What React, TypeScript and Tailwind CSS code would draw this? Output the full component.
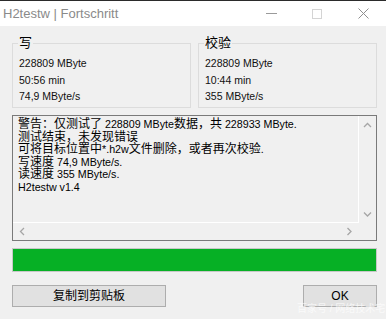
import React from "react";

const font = { fontFamily: '"Liberation Sans", "Noto Sans CJK SC", sans-serif' };

function Chevron({ dir }: { dir: "up" | "down" | "left" | "right" }) {
  const paths: Record<string, string> = {
    up: "M1 5 L4.5 1.5 L8 5",
    down: "M1 1.5 L4.5 5 L8 1.5",
    left: "M5 1 L1.5 4.5 L5 8",
    right: "M1.5 1 L5 4.5 L1.5 8",
  };
  const vert = dir === "up" || dir === "down";
  return (
    <svg width={vert ? 9 : 7} height={vert ? 7 : 9} viewBox={vert ? "0 0 9 7" : "0 0 7 9"}>
      <path d={paths[dir]} fill="none" stroke="#a6a6a6" strokeWidth="1.3" />
    </svg>
  );
}

function Group({ label, lines }: { label: string; lines: string[] }) {
  return (
    <div className="relative flex-1 border border-[#dcdcdc] pt-[11px] pl-[6px]">
      <div className="absolute left-[5px] -top-[9px] px-[1px] bg-[#f0f0f0] text-[13px] leading-[16px] text-black">
        {label}
      </div>
      {lines.map((l) => (
        <div key={l} className="text-[10.5px] leading-[16.5px] text-[#111]">
          {l}
        </div>
      ))}
    </div>
  );
}

function MixedLine({ text }: { text: string }) {
  const parts = text.match(/[\u3000-\u9fff\uff00-\uffef]+|[^\u3000-\u9fff\uff00-\uffef]+/g) || [];
  return (
    <div className="h-[12.6px] flex items-end whitespace-nowrap">
      {parts.map((p, i) =>
        /[\u3000-\u9fff\uff00-\uffef]/.test(p) ? (
          <span key={i} className="text-[12px] leading-[12.6px]">
            {p}
          </span>
        ) : (
          <span key={i} className="text-[10.7px] leading-[12.6px] whitespace-pre">
            {p}
          </span>
        )
      )}
    </div>
  );
}

export default function App() {
  const textLines = [
    "警告：仅测试了 228809 MByte数据，共 228933 MByte.",
    "测试结束，未发现错误",
    "可将目标位置中*.h2w文件删除，或者再次校验.",
    "写速度 74,9 MByte/s.",
    "读速度 355 MByte/s.",
    "H2testw v1.4",
  ];
  return (
    <div
      className="relative w-[386px] h-[319px] overflow-hidden bg-[#f0f0f0] border-t border-[#2b2b2b] flex flex-col"
      style={font}
    >
      {/* title bar */}
      <div className="h-[25px] bg-white flex items-center">
        <div className="pl-[3px] text-[13px] text-[#8a8a8a] flex-1">H2testw | Fortschritt</div>
        <div className="flex items-center h-full">
          <div className="w-[46px] flex justify-center">
            <div className="w-[11px] h-[1px] bg-[#9a9a9a]" />
          </div>
          <div className="w-[46px] flex justify-center">
            <div className="w-[10px] h-[10px] border border-[#d4d4d4]" />
          </div>
          <div className="w-[46px] flex justify-center">
            <svg width="11" height="11" viewBox="0 0 11 11">
              <path d="M0.5 0.5 L10.5 10.5 M10.5 0.5 L0.5 10.5" stroke="#8f8f8f" strokeWidth="1" />
            </svg>
          </div>
        </div>
      </div>

      {/* body */}
      <div className="flex flex-col pl-[12px] pr-[9px] pt-[17px]">
        <div className="flex gap-[7px] h-[65px]">
          <Group label="写" lines={["228809 MByte", "50:56 min", "74,9 MByte/s"]} />
          <Group label="校验" lines={["228809 MByte", "10:44 min", "355 MByte/s"]} />
        </div>

        {/* text box */}
        <div className="mt-[7px] h-[126px] border border-[#7a7a7a] flex flex-col">
          <div className="flex flex-1 min-h-0">
            <div className="flex-1 border-r border-b border-white pl-[5px] pt-[2px] text-black overflow-hidden">
              {textLines.map((l) => (
                <MixedLine key={l} text={l} />
              ))}
            </div>
            <div className="w-[17px] flex flex-col items-center justify-between pt-[6px] pb-[5px]">
              <Chevron dir="up" />
              <Chevron dir="down" />
            </div>
          </div>
          <div className="h-[17px] flex">
            <div className="flex-1 flex items-center justify-between pl-[6px] pr-[6px]">
              <Chevron dir="left" />
              <Chevron dir="right" />
            </div>
            <div className="w-[17px]" />
          </div>
        </div>

        {/* progress */}
        <div className="mt-[7px] h-[24px] border border-[#c8c8c8] bg-[#e6e6e6]">
          <div className="h-full w-full bg-[#06b025]" />
        </div>

        {/* buttons */}
        <div className="mt-[13px] flex justify-between">
          <button className="w-[154px] h-[22px] border border-[#adadad] bg-[#e1e1e1] text-[12px] text-black leading-none">
            复制到剪贴板
          </button>
          <button className="w-[74px] h-[22px] border border-[#adadad] bg-[#e1e1e1] text-[12px] text-black leading-none">
            OK
          </button>
        </div>
      </div>

      <div className="absolute left-[297px] top-[300px] text-[10px] text-white/70 whitespace-nowrap">
        百家号 / 网络技术宅
      </div>
    </div>
  );
}
